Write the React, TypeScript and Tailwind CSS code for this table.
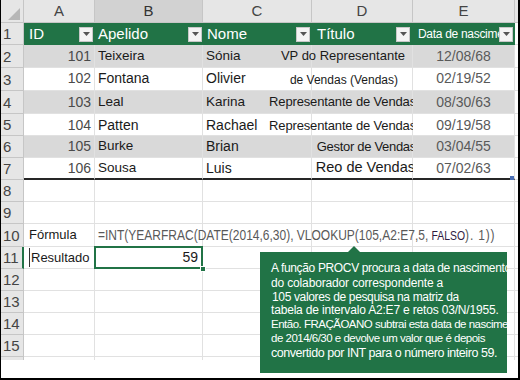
import React from 'react';

const RH =
  'w-[23px] shrink-0 bg-[#e6e6e6] border-r border-b border-[#c6c6c6] text-[#444] text-[15px] flex items-center pl-[2px] leading-none';
const CELL = 'shrink-0 border-r border-b border-[#e1e1e1] flex whitespace-nowrap';

function Btn() {
  return (
    <div className="w-[14px] h-[15px] shrink-0 bg-[#f4f4f4] border border-[#c8c8c8] flex items-center justify-center">
      <svg width="7" height="4" viewBox="0 0 7 4">
        <path d="M0 0h7L3.5 4z" fill="#555" />
      </svg>
    </div>
  );
}

type DataRow = {
  n: number;
  h: string;
  bg: string;
  align: string;
  id: string;
  last: string;
  lastCls: string;
  first: string;
  firstCls: string;
  title: string;
  titleCls: string;
  date: string;
  bottom: string;
};

const dataRows: DataRow[] = [
  {
    n: 2,
    h: 'h-[23px]',
    bg: 'bg-[#d9d9d9]',
    align: 'items-center',
    id: '101',
    last: 'Teixeira',
    lastCls: 'text-[13.5px]',
    first: 'Sónia',
    firstCls: 'text-[13.5px]',
    title: 'VP do Representante',
    titleCls: 'text-[13px] mr-[7px]',
    date: '12/08/68',
    bottom: 'border-b-[#e1e1e1]',
  },
  {
    n: 3,
    h: 'h-[23px]',
    bg: 'bg-white',
    align: 'items-end pb-[1px]',
    id: '102',
    last: 'Fontana',
    lastCls: 'text-[14px]',
    first: 'Olivier',
    firstCls: 'text-[14px]',
    title: 'de Vendas (Vendas)',
    titleCls: 'text-[12px] mr-[14px]',
    date: '02/19/52',
    bottom: 'border-b-[#e1e1e1]',
  },
  {
    n: 4,
    h: 'h-[23px]',
    bg: 'bg-[#d9d9d9]',
    align: 'items-center',
    id: '103',
    last: 'Leal',
    lastCls: 'text-[13.5px]',
    first: 'Karina',
    firstCls: 'text-[13.5px]',
    title: 'Representante de Vendas',
    titleCls: 'text-[13px] tracking-[-0.15px] mr-[-4px]',
    date: '08/30/63',
    bottom: 'border-b-[#e1e1e1]',
  },
  {
    n: 5,
    h: 'h-[22px]',
    bg: 'bg-white',
    align: 'items-center pt-[2px]',
    id: '104',
    last: 'Patten',
    lastCls: 'text-[14px]',
    first: 'Rachael',
    firstCls: 'text-[14px]',
    title: 'Representante de Vendas',
    titleCls: 'text-[13px] tracking-[-0.15px] mr-[-4px]',
    date: '09/19/58',
    bottom: 'border-b-[#e1e1e1]',
  },
  {
    n: 6,
    h: 'h-[22px]',
    bg: 'bg-[#d9d9d9]',
    align: 'items-center',
    id: '105',
    last: 'Burke',
    lastCls: 'text-[13.5px]',
    first: 'Brian',
    firstCls: 'text-[14px]',
    title: 'Gestor de Vendas',
    titleCls: 'text-[13px] tracking-[-0.3px] mr-[-4px]',
    date: '03/04/55',
    bottom: 'border-b-[#e1e1e1]',
  },
  {
    n: 7,
    h: 'h-[22px]',
    bg: 'bg-white',
    align: 'items-center',
    id: '106',
    last: 'Sousa',
    lastCls: 'text-[13.5px]',
    first: 'Luis',
    firstCls: 'text-[14px]',
    title: 'Reo de Vendas',
    titleCls: 'text-[14.5px] mr-[-3px]',
    date: '07/02/63',
    bottom: 'border-b-2 border-b-[#262626]',
  },
];

function EmptyRow({ n, h }: { n: number; h: string }) {
  return (
    <div className={`flex ${h}`}>
      <div className={RH}>{n}</div>
      <div className={`${CELL} w-[71px]`} />
      <div className={`${CELL} w-[108px]`} />
      <div className={`${CELL} w-[109px]`} />
      <div className={`${CELL} w-[101px]`} />
      <div className={`${CELL} w-[102px]`} />
      <div className="w-[3px] shrink-0 border-b border-[#e1e1e1]" />
    </div>
  );
}

export default function App() {
  return (
    <div className="relative w-[520px] h-[380px] overflow-hidden bg-white border-l border-r-2 border-b-2 border-black font-['Liberation_Sans',Arial,sans-serif] text-[#1a1a1a]">
      {/* column header */}
      <div className="flex h-[23px]">
        <div className="w-[23px] shrink-0 bg-[#e6e6e6] border-r border-b border-[#c6c6c6] flex items-end justify-end pr-[3px] pb-[2px]">
          <svg width="12" height="12" viewBox="0 0 12 12">
            <path d="M12 0V12H0z" fill="#b7b7b7" />
          </svg>
        </div>
        <div className="w-[71px] shrink-0 bg-[#e6e6e6] border-r border-b border-[#c6c6c6] flex items-center justify-center text-[15px] text-[#444]">
          A
        </div>
        <div className="w-[108px] shrink-0 bg-[#d2d2d2] border-r border-b border-[#c6c6c6] flex items-center justify-center text-[15px] text-[#333]">
          B
        </div>
        <div className="w-[109px] shrink-0 bg-[#e6e6e6] border-r border-b border-[#c6c6c6] flex items-center justify-center text-[15px] text-[#444]">
          C
        </div>
        <div className="w-[101px] shrink-0 bg-[#e6e6e6] border-r border-b border-[#c6c6c6] flex items-center justify-center text-[15px] text-[#444]">
          D
        </div>
        <div className="w-[102px] shrink-0 bg-[#e6e6e6] border-r border-b border-[#c6c6c6] flex items-center justify-center text-[15px] text-[#444]">
          E
        </div>
        <div className="w-[3px] shrink-0 bg-[#e6e6e6] border-b border-[#c6c6c6]" />
      </div>

      {/* row 1 : table header */}
      <div className="flex h-[22px]">
        <div className={RH}>1</div>
        <div className="w-[71px] shrink-0 bg-[#217346] flex items-center justify-between pl-[5px] pr-[2px] text-white text-[15px]">
          <span>ID</span>
          <Btn />
        </div>
        <div className="w-[108px] shrink-0 bg-[#217346] flex items-center justify-between pl-[3px] pr-[1px] text-white text-[15px]">
          <span>Apelido</span>
          <Btn />
        </div>
        <div className="w-[109px] shrink-0 bg-[#217346] flex items-center justify-between pl-[4px] pr-[2px] text-white text-[15px]">
          <span>Nome</span>
          <Btn />
        </div>
        <div className="w-[101px] shrink-0 bg-[#217346] flex items-center justify-between pl-[5px] pr-[3px] text-white text-[15px]">
          <span>Título</span>
          <Btn />
        </div>
        <div className="w-[102px] shrink-0 bg-[#217346] flex items-center pl-[5px] pr-[2px] text-white text-[12px] tracking-[-0.3px]">
          <span className="flex-1 min-w-0 overflow-hidden whitespace-nowrap">Data de nascimento</span>
          <Btn />
        </div>
        <div className="w-[3px] shrink-0 border-b border-[#e1e1e1]" />
      </div>

      {dataRows.map((r) => (
        <div key={r.n} className={`flex ${r.h}`}>
          <div className={RH}>{r.n}</div>
          <div className={`${CELL} ${r.bg} ${r.align} ${r.bottom} w-[71px] justify-end pr-[3px] text-[14px] text-[#4a4a4a]`}>
            {r.id}
          </div>
          <div className={`${CELL} ${r.bg} ${r.align} ${r.bottom} w-[108px] pl-[3px]`}>
            <span className={r.lastCls}>{r.last}</span>
          </div>
          <div className={`${CELL} ${r.bg} ${r.align} ${r.bottom} w-[109px] pl-[3px]`}>
            <span className={r.firstCls}>{r.first}</span>
          </div>
          <div className={`${CELL} ${r.bg} ${r.align} ${r.bottom} w-[101px] justify-end`}>
            <span className={r.titleCls}>{r.title}</span>
          </div>
          <div
            className={`${CELL} ${r.bg} ${r.align} ${r.bottom} w-[102px] justify-center text-[14px] text-[#595959] ${
              r.n === 7 ? 'relative' : ''
            }`}
          >
            {r.date}
            {r.n === 7 && (
              <div className="absolute right-[0px] bottom-[-2px] w-[4px] h-[4px] bg-[#4a6fb5]" />
            )}
          </div>
          <div className="w-[3px] shrink-0 border-b border-[#e1e1e1]" />
        </div>
      ))}

      <EmptyRow n={8} h="h-[22px]" />
      <EmptyRow n={9} h="h-[22px]" />

      {/* row 10: formula */}
      <div className="flex h-[23px]">
        <div className={RH}>10</div>
        <div className={`${CELL} w-[71px] items-center pl-[5px] text-[13px]`}>Fórmula</div>
        <div className={`${CELL} w-[108px] items-center pl-[3px]`}>
          <span className="inline-block origin-left scale-x-[0.8] whitespace-nowrap text-[15px] text-[#595959]">
            =INT(YEARFRAC(DATE(2014,6,30), VLOOKUP(105,A2:E7,5,{' '}
            <span className="text-[13px] text-[#2e1a3f]">FALSO</span>
            <span className="tracking-[1px]">). 1))</span>
          </span>
        </div>
        <div className={`${CELL} w-[109px]`} />
        <div className={`${CELL} w-[101px]`} />
        <div className={`${CELL} w-[102px]`} />
        <div className="w-[3px] shrink-0 border-b border-[#e1e1e1]" />
      </div>

      {/* row 11: result */}
      <div className="flex h-[22px]">
        <div className={`${RH} border-r-2 border-r-[#217346]`}>11</div>
        <div className={`${CELL} w-[71px] items-center pl-[5px] text-[13px]`}>
          <span className="border-l border-[#333] pl-[1px]">Resultado</span>
        </div>
        <div className={`${CELL} w-[108px] items-center justify-end pr-[4px] text-[14px] relative`}>
          59
          <div className="absolute left-[-1px] top-[-1px] right-[-1px] bottom-[-1px] border-2 border-[#217346]" />
          <div className="absolute right-[-4px] bottom-[-4px] w-[6px] h-[6px] bg-[#217346] border border-white" />
        </div>
        <div className={`${CELL} w-[109px]`} />
        <div className={`${CELL} w-[101px]`} />
        <div className={`${CELL} w-[102px]`} />
        <div className="w-[3px] shrink-0 border-b border-[#e1e1e1]" />
      </div>

      <EmptyRow n={12} h="h-[22px]" />
      <EmptyRow n={13} h="h-[22px]" />
      <EmptyRow n={14} h="h-[22px]" />
      <EmptyRow n={15} h="h-[22px]" />

      <div className="flex h-[3px]">
        <div className="w-[23px] shrink-0 bg-[#e6e6e6] border-r border-[#c6c6c6]" />
        <div className="w-[71px] shrink-0 border-r border-[#e1e1e1]" />
        <div className="w-[108px] shrink-0 border-r border-[#e1e1e1]" />
        <div className="w-[109px] shrink-0 border-r border-[#e1e1e1]" />
        <div className="w-[101px] shrink-0 border-r border-[#e1e1e1]" />
        <div className="w-[102px] shrink-0 border-r border-[#e1e1e1]" />
      </div>

      {/* callout */}
      <div className="absolute left-[259px] top-[252px] w-[247px] h-[121px] bg-[#217346] text-white overflow-hidden pl-[11px] pt-[9px]">
        <div className="h-[14px] leading-[14px] text-[12px] tracking-[-0.35px] whitespace-nowrap">
          A função PROCV procura a data de nascimento
        </div>
        <div className="h-[16px] leading-[16px] text-[12px] tracking-[-0.15px] whitespace-nowrap">
          do colaborador correspondente a
        </div>
        <div className="h-[12px] leading-[12px] text-[12px] tracking-[-0.35px] whitespace-nowrap pl-[1px]">
          105 valores de pesquisa na matriz da
        </div>
        <div className="h-[14px] leading-[14px] text-[12px] tracking-[-0.18px] whitespace-nowrap">
          tabela de intervalo A2:E7 e retos 03/N/1955.
        </div>
        <div className="h-[14px] leading-[14px] text-[11.5px] tracking-[-0.5px] whitespace-nowrap">
          Então. FRAÇÃOANO subtrai esta data de nascimento
        </div>
        <div className="h-[14px] leading-[14px] text-[11.5px] tracking-[-0.5px] whitespace-nowrap">
          de 2014/6/30 e devolve um valor que é depois
        </div>
        <div className="h-[16px] leading-[16px] text-[12.5px] tracking-[-0.45px] whitespace-nowrap">
          convertido por INT para o número inteiro 59.
        </div>
      </div>
      <div className="absolute left-[347px] top-[246px] w-0 h-0 border-x-[6px] border-x-transparent border-b-[6px] border-b-[#217346]" />
    </div>
  );
}
